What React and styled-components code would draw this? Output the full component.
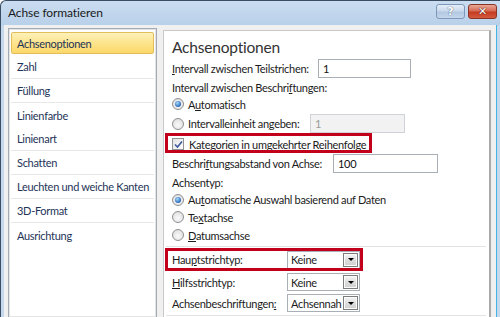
import styled, { createGlobalStyle } from "styled-components";

const GlobalStyle = createGlobalStyle`
  html, body { margin: 0; padding: 0; }
  body {
    width: 500px;
    height: 317px;
    overflow: hidden;
    font-family: Lato, "Noto Sans", sans-serif;
    font-size: 11px;
    letter-spacing: -0.3px;
  }
`;

const Window = styled.div`
  width: 500px;
  height: 317px;
  box-sizing: border-box;
  display: flex;
  flex-direction: column;
  border-left: 1px solid #3a4d63;
  border-top: 1px solid #3a4d63;
  border-top-left-radius: 6px;
  background: linear-gradient(#cadcf0, #b9d0ea 24px, #c6d8ec 25px, #c6d8ec);
  overflow: hidden;
`;

const TitleBar = styled.div`
  height: 24px;
  flex-shrink: 0;
  display: flex;
  align-items: flex-start;
  justify-content: space-between;
  padding: 0 3px 0 7px;
`;

const Title = styled.span`
  font-size: 12px;
  letter-spacing: -0.1px;
  line-height: 24px;
  color: #1a1a1a;
`;

const CaptionButtons = styled.div`
  display: flex;
  gap: 3px;
  padding-top: 3px;
`;

const CaptionButton = styled.div`
  width: 29px;
  height: 15px;
  box-sizing: border-box;
  border-radius: 3px;
  display: flex;
  align-items: center;
  justify-content: center;
  font-family: "DejaVu Sans", sans-serif;
  font-weight: bold;
  font-size: 11px;
  letter-spacing: 0;
  color: #fff;
  border: 1px solid ${(p) => (p.$close ? "#8a3426" : "#7d98b9")};
  background: ${(p) =>
    p.$close
      ? "linear-gradient(#e9a898, #d56a55 45%, #c43b22 55%, #d4593f)"
      : "linear-gradient(#e6eef8, #c9d9ec 45%, #b2c8e2 55%, #c4d6eb)"};
  text-shadow: ${(p) =>
    p.$close
      ? "0 0 1px #4a120a, 0 0 1px #4a120a"
      : "0 0 1px #5a6e88, 0 0 1px #5a6e88"};
`;

const Client = styled.div`
  flex: 1;
  display: flex;
  gap: 6px;
  margin: 0 3px 0 3px;
  padding: 3px 5px 0 4px;
  background: #f0f0f0;
  border-right: 1px solid #44b4e6;
  min-height: 0;
`;

const NavPanel = styled.div`
  width: 149px;
  box-sizing: border-box;
  border: 1px solid #a3aab3;
  border-bottom: none;
  background: #fff;
  box-shadow: inset 0 0 0 1px #e4e4e4;
  padding: 3px 2px 0 2px;
  display: flex;
  flex-direction: column;
`;

const NavItem = styled.div`
  height: ${(p) => (p.$selected ? 22 : 24)}px;
  margin-bottom: ${(p) => (p.$selected ? 1 : 0)}px;
  box-sizing: border-box;
  display: flex;
  align-items: center;
  white-space: nowrap;
  color: #1e3458;
  font-size: 11px;
  border-radius: ${(p) => (p.$selected ? 2 : 0)}px;
  border: ${(p) => (p.$selected ? "1px solid #e2bd5a" : "none")};
  border-bottom: ${(p) =>
    p.$selected ? "1px solid #e2bd5a" : p.$sep ? "1px solid #e8e8e8" : "none"};
  background: ${(p) =>
    p.$selected ? "linear-gradient(#fef1b9, #fde48c 50%, #fcd86a)" : "transparent"};
  padding-left: ${(p) => (p.$selected ? 5 : 6)}px;
`;

const OptionsPanel = styled.div`
  flex: 1;
  margin-top: 2px;
  box-sizing: border-box;
  background: #fff;
  border-left: 1px solid #c9c9c9;
  border-top: 1px solid #c9c9c9;
  border-right: 2px solid #a9a9a9;
  padding-left: 8px;
  display: flex;
  flex-direction: column;
  color: #1b1b1b;
`;

const Heading = styled.div`
  padding-top: 4px;
  height: 24px;
  line-height: 24px;
  font-size: 15.5px;
  letter-spacing: -0.2px;
  color: #333;
`;

const Row = styled.div`
  position: relative;
  height: ${(p) => p.$h}px;
  flex-shrink: 0;
  display: flex;
  align-items: center;
`;

const Label = styled.span`
  width: ${(p) => (p.$w ? `${p.$w}px` : "auto")};
  flex-shrink: 0;
  white-space: nowrap;
  font-size: 11px;
`;

const Field = styled.div`
  width: ${(p) => p.$w}px;
  height: 19px;
  box-sizing: border-box;
  border: 1px solid ${(p) => (p.$disabled ? "#cfd2d6" : "#a9afb7")};
  background: ${(p) => (p.$disabled ? "#f2f2f2" : "#fff")};
  color: ${(p) => (p.$disabled ? "#9a9a9a" : "#111")};
  padding-left: 4px;
  display: flex;
  align-items: center;
  font-size: 11px;
`;

const Select = styled.div`
  width: 73px;
  height: 18px;
  box-sizing: border-box;
  border: 1px solid #a9afb7;
  background: #fff;
  display: flex;
  align-items: center;
  justify-content: space-between;
  padding: 0 1px 0 3px;
  font-size: 11px;
  overflow: hidden;
  white-space: nowrap;
`;

const DropButton = styled.span`
  width: 15px;
  height: 14px;
  flex-shrink: 0;
  box-sizing: border-box;
  border: 1px solid #7d7d7d;
  background: linear-gradient(#f6f6f6, #dedede 50%, #cfcfcf);
  box-shadow: inset 0 0 0 1px #fbfbfb;
  display: flex;
  align-items: center;
  justify-content: center;
  &::after {
    content: "";
    border-left: 3px solid transparent;
    border-right: 3px solid transparent;
    border-top: 3px solid #000;
  }
`;

const Radio = styled.span`
  width: 12px;
  height: 12px;
  margin-right: 4px;
  flex-shrink: 0;
  box-sizing: border-box;
  border-radius: 50%;
  border: 1px solid #8e9093;
  background: radial-gradient(circle at 50% 60%, #fafafa, #d9d9d9);
  display: flex;
  align-items: center;
  justify-content: center;
  &::after {
    content: "";
    display: ${(p) => (p.$checked ? "block" : "none")};
    width: 6px;
    height: 6px;
    border-radius: 50%;
    background: radial-gradient(circle at 40% 35%, #a8dcfb, #2f6fc0 65%, #103f88);
  }
`;

const Check = styled.span`
  width: 12px;
  height: 12px;
  margin-right: 5px;
  flex-shrink: 0;
  box-sizing: border-box;
  border: 1px solid #8f9296;
  background: linear-gradient(135deg, #e2e2e2, #fdfdfd);
  display: flex;
  align-items: center;
  justify-content: center;
`;

const Highlight = styled.span`
  position: absolute;
  left: -7px;
  top: ${(p) => p.$top}px;
  bottom: ${(p) => p.$bottom}px;
  width: ${(p) => p.$w}px;
  box-sizing: border-box;
  border: 3px solid #c3001c;
  pointer-events: none;
`;

const Separator = styled.div`
  height: 1px;
  flex-shrink: 0;
  margin: ${(p) => p.$mt || 0}px 3px 0 -6px;
  background: #e3e3e3;
`;

const navItems = [
  { label: "Achsenoptionen", selected: true },
  { label: "Zahl", sep: true },
  { label: "Füllung", sep: true },
  { label: "Linienfarbe" },
  { label: "Linienart", sep: true },
  { label: "Schatten", sep: true },
  { label: "Leuchten und weiche Kanten", sep: true },
  { label: "3D-Format", sep: true },
  { label: "Ausrichtung" },
];

const CheckMark = () => (
  <svg width="9" height="9" viewBox="0 0 9 9">
    <path d="M1 4.5 L3.5 7 L8 1.5" fill="none" stroke="#3d5a9e" strokeWidth="1.6" />
  </svg>
);

export default function App() {
  return (
    <>
      <GlobalStyle />
      <Window>
        <TitleBar>
          <Title>Achse formatieren</Title>
          <CaptionButtons>
            <CaptionButton>?</CaptionButton>
            <CaptionButton $close>✕</CaptionButton>
          </CaptionButtons>
        </TitleBar>
        <Client>
          <NavPanel>
            {navItems.map((item) => (
              <NavItem key={item.label} $selected={item.selected} $sep={item.sep}>
                {item.label}
              </NavItem>
            ))}
          </NavPanel>
          <OptionsPanel>
            <Heading>Achsenoptionen</Heading>
            <Row $h={19}>
              <Label $w={146}>
                <u>I</u>ntervall zwischen Teilstrichen:
              </Label>
              <Field $w={93}>1</Field>
            </Row>
            <Row $h={18}>
              <Label>
                Intervall zwischen Beschri<u>f</u>tungen:
              </Label>
            </Row>
            <Row $h={16}>
              <Radio $checked />
              <Label>
                A<u>u</u>tomatisch
              </Label>
            </Row>
            <Row $h={23}>
              <Radio />
              <Label $w={122}>
                Intervalleinheit an<u>g</u>eben:
              </Label>
              <Field $w={95} $disabled>
                1
              </Field>
            </Row>
            <Row $h={18}>
              <Highlight $top={-2} $bottom={0} $w={207} />
              <Check>
                <CheckMark />
              </Check>
              <Label>
                <u>K</u>ategorien in umgekehrter Reihenfolge
              </Label>
            </Row>
            <Row $h={21}>
              <Label $w={161}>
                Beschri<u>f</u>tungsabstand von Achse:
              </Label>
              <Field $w={105}>100</Field>
            </Row>
            <Row $h={17}>
              <Label>Achsentyp:</Label>
            </Row>
            <Row $h={17}>
              <Radio $checked />
              <Label>
                Au<u>t</u>omatische Auswahl basierend auf Daten
              </Label>
            </Row>
            <Row $h={18}>
              <Radio />
              <Label>
                Te<u>x</u>tachse
              </Label>
            </Row>
            <Row $h={18}>
              <Radio />
              <Label>
                <u>D</u>atumsachse
              </Label>
            </Row>
            <Separator $mt={2} />
            <Row $h={25}>
              <Highlight $top={1} $bottom={1} $w={198} />
              <Label $w={115}>
                Hau<u>p</u>tstrichtyp:
              </Label>
              <Select>
                Keine
                <DropButton />
              </Select>
            </Row>
            <Row $h={20}>
              <Label $w={115}>
                <u>H</u>ilfsstrichtyp:
              </Label>
              <Select>
                Keine
                <DropButton />
              </Select>
            </Row>
            <Row $h={22}>
              <Label $w={115}>
                Achsenbeschriftungen<u>:</u>
              </Label>
              <Select>
                Achsennah
                <DropButton />
              </Select>
            </Row>
            <Separator $mt={1} />
          </OptionsPanel>
        </Client>
      </Window>
    </>
  );
}
